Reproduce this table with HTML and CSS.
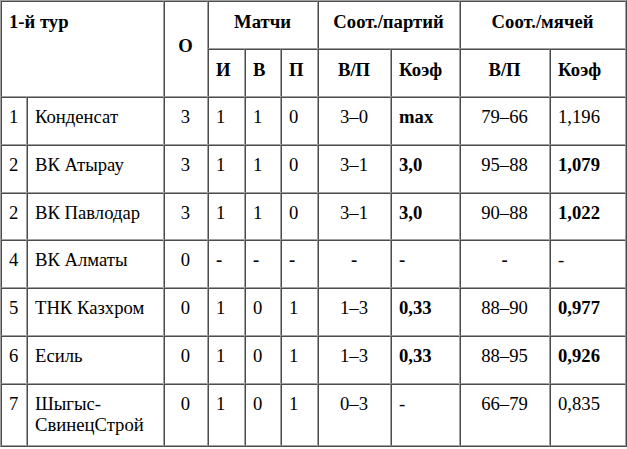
FILE: index.html
```html
<!DOCTYPE html>
<html lang="ru">
<head>
<meta charset="utf-8">
<title>1-й тур</title>
<link rel="stylesheet" href="styles.css">
</head>
<body>
<table class="standings">
  <colgroup>
    <col class="c-pos"><col class="c-team"><col class="c-pts">
    <col class="c-i"><col class="c-w"><col class="c-l">
    <col class="c-sets"><col class="c-skoef"><col class="c-balls"><col class="c-bkoef">
  </colgroup>
  <thead>
    <tr>
      <th class="h-tour" colspan="2" rowspan="2">1-й тур</th>
      <th class="h-pts" rowspan="2">О</th>
      <th class="center" colspan="3">Матчи</th>
      <th class="center" colspan="2">Соот./партий</th>
      <th class="center" colspan="2">Соот./мячей</th>
    </tr>
    <tr>
      <th>И</th><th>В</th><th>П</th>
      <th class="center">В/П</th><th>Коэф</th>
      <th class="center">В/П</th><th>Коэф</th>
    </tr>
  </thead>
  <tbody>
    <tr>
      <td>1</td><td>Конденсат</td><td class="center">3</td>
      <td>1</td><td>1</td><td>0</td>
      <td class="center">3–0</td><td class="b">max</td>
      <td class="center">79–66</td><td>1,196</td>
    </tr>
    <tr>
      <td>2</td><td>ВК Атырау</td><td class="center">3</td>
      <td>1</td><td>1</td><td>0</td>
      <td class="center">3–1</td><td class="b">3,0</td>
      <td class="center">95–88</td><td class="b">1,079</td>
    </tr>
    <tr>
      <td>2</td><td>ВК Павлодар</td><td class="center">3</td>
      <td>1</td><td>1</td><td>0</td>
      <td class="center">3–1</td><td class="b">3,0</td>
      <td class="center">90–88</td><td class="b">1,022</td>
    </tr>
    <tr>
      <td>4</td><td>ВК Алматы</td><td class="center">0</td>
      <td class="b">-</td><td class="b">-</td><td class="b">-</td>
      <td class="center b">-</td><td class="b">-</td>
      <td class="center b">-</td><td>-</td>
    </tr>
    <tr>
      <td>5</td><td>ТНК Казхром</td><td class="center">0</td>
      <td>1</td><td>0</td><td>1</td>
      <td class="center">1–3</td><td class="b">0,33</td>
      <td class="center">88–90</td><td class="b">0,977</td>
    </tr>
    <tr>
      <td>6</td><td>Есиль</td><td class="center">0</td>
      <td>1</td><td>0</td><td>1</td>
      <td class="center">1–3</td><td class="b">0,33</td>
      <td class="center">88–95</td><td class="b">0,926</td>
    </tr>
    <tr class="last">
      <td>7</td><td>Шыгыс-<br>СвинецСтрой</td><td class="center">0</td>
      <td>1</td><td>0</td><td>1</td>
      <td class="center">0–3</td><td>-</td>
      <td class="center">66–79</td><td>0,835</td>
    </tr>
  </tbody>
</table>
</body>
</html>
```

FILE: styles.css
```css
html, body {
  margin: 0;
  padding: 0;
  background: #ffffff;
}

.standings {
  width: 627px;
  table-layout: fixed;
  border-collapse: separate;
  border-spacing: 0;
  border: 1px outset #a0a0a0;
  font-family: "Liberation Serif", "Times New Roman", serif;
  font-size: 18.67px;
  line-height: 21px;
  color: #000000;
}

.c-pos { width: 26px; }
.c-team { width: 137px; }
.c-pts { width: 44px; }
.c-i { width: 37px; }
.c-w { width: 36px; }
.c-l { width: 37px; }
.c-sets { width: 73px; }
.c-skoef { width: 69px; }
.c-balls { width: 90px; }
.c-bkoef { width: 76px; }

.standings th,
.standings td {
  border: 1px inset #a0a0a0;
  text-align: left;
  vertical-align: top;
  overflow: hidden;
  white-space: nowrap;
}

.standings th {
  padding: 9px 8px 16px 7px;
  font-weight: bold;
}

.standings td {
  padding: 8px 8px 16.8px 7px;
  font-weight: normal;
}

.standings .last td {
  padding-bottom: 10px;
}

.standings .h-pts {
  text-align: center;
  vertical-align: middle;
}

.standings .center {
  text-align: center;
}

.standings .b {
  font-weight: bold;
}
```
